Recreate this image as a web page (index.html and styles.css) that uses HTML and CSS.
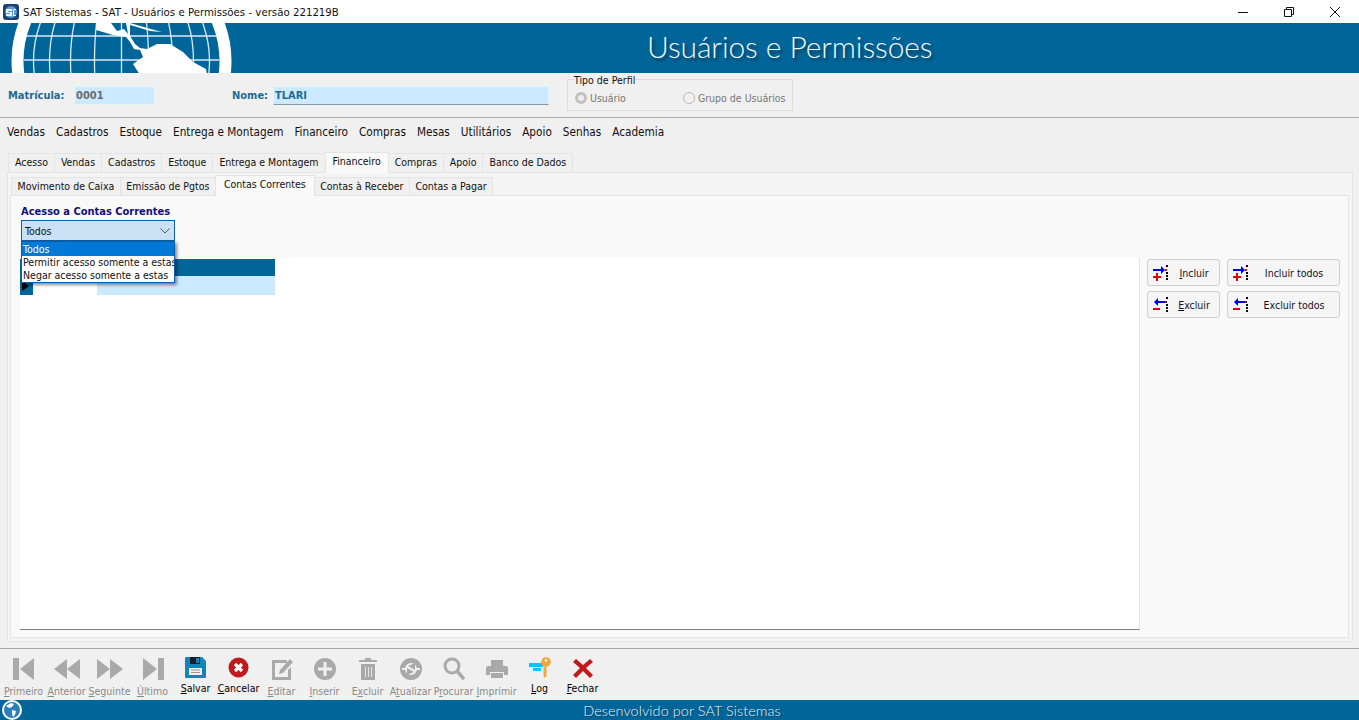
FILE: index.html
```html
<!DOCTYPE html>
<html lang="pt-BR">
<head>
  <meta charset="UTF-8" />
  <title>SAT Sistemas - Usuários e Permissões</title>
  <link rel="stylesheet" href="styles.css">
</head>
<body>
  <svg class="defs" width="0" height="0">
    <symbol id="ic-incluir" viewBox="0 0 16 16">
      <rect x="0" y="4" width="9" height="2" fill="#0000e0"/>
      <path d="M8 1l4 4-4 4z" fill="#0000e0"/>
      <rect x="12" y="4" width="2" height="2" fill="#e00000"/>
      <path d="M3 9h2v3h3v2H5v3H3v-3H0v-2h3z" fill="#e00000" transform="translate(0 -1)"/>
      <path d="M13 0h2v2h-2zM13 7h2v2h-2zM13 10h2v2h-2zM13 13h2v2h-2z" fill="#000"/>
    </symbol>
    <symbol id="ic-excluir" viewBox="0 0 16 16">
      <rect x="4" y="4" width="8" height="2" fill="#0000e0"/>
      <path d="M5 1L1 5l4 4z" fill="#0000e0"/>
      <rect x="12" y="4" width="2" height="2" fill="#e00000"/>
      <rect x="0" y="11" width="7" height="2" fill="#e00000"/>
      <path d="M13 0h2v2h-2zM13 7h2v2h-2zM13 10h2v2h-2zM13 13h2v2h-2z" fill="#000"/>
    </symbol>
  </svg>

  <!-- Barra de titulo -->
  <div class="titulo-janela">
    <svg class="app-icon" width="16" height="16" viewBox="0 0 16 16">
      <rect width="16" height="16" rx="3" fill="#1d3f73"/>
      <circle cx="8" cy="8" r="6" fill="#5f97cf"/>
      <path d="M3 5h6v2H5v1h4v4H3v-2h4V9H3zM10 5h3v1h-2v5h2v1h-3z" fill="#e9f3fb"/>
    </svg>
    <span class="titulo-texto">SAT Sistemas - SAT - Usuários e Permissões - versão 221219B</span>
    <div class="controles">
      <div class="controle"><svg width="12" height="12" viewBox="0 0 12 12"><path d="M1 6.500h10" stroke="#111" fill="none"/></svg></div>
      <div class="controle"><svg width="12" height="12" viewBox="0 0 12 12"><path d="M1.500 3.500h7v7h-7zM3.500 3.500v-2h7v7h-2" stroke="#111" fill="none"/></svg></div>
      <div class="controle"><svg width="12" height="12" viewBox="0 0 12 12"><path d="M1 1l10 10M11 1L1 11" stroke="#111" fill="none"/></svg></div>
    </div>
  </div>

  <!-- Cabecalho -->
  <div class="cabecalho">
    <svg class="globo" width="240" height="50" viewBox="0 23 240 50">
      <circle cx="121.500" cy="61" r="104" fill="none" stroke="#fff" stroke-width="12"/>
      <g fill="none" stroke="#dce9f6" stroke-width="1.300">
        <ellipse cx="121.500" cy="61" rx="27" ry="98"/>
        <ellipse cx="121.500" cy="61" rx="51" ry="98"/>
        <ellipse cx="121.500" cy="61" rx="72" ry="98"/>
        <ellipse cx="121.500" cy="61" rx="88" ry="98"/>
        <path d="M121.500 -37V159M26 36H217M24 60H219"/>
      </g>
      <path d="M96 23H111L117 31 124 29 128 34 126 23H130V36L135 44 140 48 147 49 157 44H170L183 52 193 62 206 69 207 75H140L133 64 143 57 140 50 134 49 130 42 126 37 113 35 96 30z" fill="#fff"/>
      <path d="M130 23l17 5 15 4-12-1-13-4-7-2z" fill="#fff"/>
    </svg>
    <div class="cabecalho-titulo">Usuários e Permissões</div>
  </div>

  <!-- Dados do usuario -->
  <div class="dados">
    <label class="dados-label">Matrícula:</label>
    <div class="campo campo-matricula">0001</div>
    <label class="dados-label dados-nome">Nome:</label>
    <div class="campo campo-nome">TLARI</div>
    <fieldset class="perfil">
      <legend>Tipo de Perfil</legend>
      <span class="radio radio-on"></span><span class="radio-texto">Usuário</span>
      <span class="radio radio-grupo"></span><span class="radio-texto">Grupo de Usuários</span>
    </fieldset>
  </div>

  <!-- Menu -->
  <div class="menu">
    <span>Vendas</span><span>Cadastros</span><span>Estoque</span><span>Entrega e Montagem</span><span>Financeiro</span><span>Compras</span><span>Mesas</span><span>Utilitários</span><span>Apoio</span><span>Senhas</span><span>Academia</span>
  </div>

  <div class="area">
    <div class="abas abas-1">
      <div class="aba">Acesso</div>
      <div class="aba">Vendas</div>
      <div class="aba">Cadastros</div>
      <div class="aba">Estoque</div>
      <div class="aba">Entrega e Montagem</div>
      <div class="aba ativa">Financeiro</div>
      <div class="aba">Compras</div>
      <div class="aba">Apoio</div>
      <div class="aba">Banco de Dados</div>
    </div>
    <div class="painel-externo">
      <div class="abas abas-2">
        <div class="aba">Movimento de Caixa</div>
        <div class="aba">Emissão de Pgtos</div>
        <div class="aba ativa">Contas Correntes</div>
        <div class="aba">Contas à Receber</div>
        <div class="aba">Contas a Pagar</div>
      </div>
      <div class="painel-interno">
        <h2 class="acesso-titulo">Acesso a Contas Correntes</h2>
        <div class="combo">
          <span>Todos</span>
          <svg width="10" height="6" viewBox="0 0 10 6"><path d="M.5.500L5 5 9.500.500" fill="none" stroke="#555"/></svg>
          <!-- Lista aberta do combo -->
          <div class="combo-lista">
            <div class="combo-item selecionado">Todos</div>
            <div class="combo-item">Permitir acesso somente a estas</div>
            <div class="combo-item">Negar acesso somente a estas</div>
          </div>
        </div>
        <div class="conteudo">
          <div class="grade">
            <div class="grade-cabecalho"></div>
            <div class="grade-linha">
              <div class="grade-indicador"><svg width="7" height="10" viewBox="0 0 7 10"><path d="M0 0l7 5-7 5z" fill="#000"/></svg></div>
              <div class="grade-cel"></div>
              <div class="grade-resto"></div>
            </div>
          </div>
          <div class="botoes">
            <button class="botao botao-curto"><svg width="16" height="16"><use href="#ic-incluir"/></svg><span class="botao-texto"><u>I</u>ncluir</span></button>
            <button class="botao botao-longo"><svg width="16" height="16"><use href="#ic-incluir"/></svg><span class="botao-texto">Incluir todos</span></button>
            <button class="botao botao-curto"><svg width="16" height="16"><use href="#ic-excluir"/></svg><span class="botao-texto"><u>E</u>xcluir</span></button>
            <button class="botao botao-longo"><svg width="16" height="16"><use href="#ic-excluir"/></svg><span class="botao-texto">Excluir todos</span></button>
          </div>
        </div>
      </div>
    </div>
  </div>

  <!-- Barra de ferramentas -->
  <div class="ferramentas">
    <div class="ferramenta off">
      <div class="ico"><svg width="24" height="24" viewBox="0 0 24 24"><path d="M1 1h6v22H1zM22 1v22L8 12z" fill="#a9a9a9"/></svg></div>
      <span><u>P</u>rimeiro</span>
    </div>
    <div class="ferramenta off">
      <div class="ico"><svg width="28" height="24" viewBox="0 0 28 24"><path d="M14 2v20L1 12zM27 2v20L14 12z" fill="#a9a9a9"/></svg></div>
      <span><u>A</u>nterior</span>
    </div>
    <div class="ferramenta off">
      <div class="ico"><svg width="28" height="24" viewBox="0 0 28 24"><path d="M1 2v20l13-10zM14 2v20l13-10z" fill="#a9a9a9"/></svg></div>
      <span><u>S</u>eguinte</span>
    </div>
    <div class="ferramenta off">
      <div class="ico"><svg width="24" height="24" viewBox="0 0 24 24"><path d="M23 1h-6v22h6zM2 1v22l14-11z" fill="#a9a9a9"/></svg></div>
      <span><u>Ú</u>ltimo</span>
    </div>
    <div class="ferramenta on">
      <div class="ico"><svg width="21" height="21" viewBox="0 0 21 21"><path d="M1 0h16l4 4v16a1 1 0 0 1-1 1H1a1 1 0 0 1-1-1V1a1 1 0 0 1 1-1z" fill="#1285b8"/><path d="M5 0h10v7H5z" fill="#1a1a2a"/><path d="M11 1h3v5h-3z" fill="#1285b8"/><rect x="4" y="11" width="13" height="7" fill="#f1f1f1"/><path d="M6 13h9M6 15.500h9" stroke="#999"/></svg></div>
      <span><u>S</u>alvar</span>
    </div>
    <div class="ferramenta on">
      <div class="ico"><svg width="21" height="21" viewBox="0 0 21 21"><circle cx="10.500" cy="10.500" r="10" fill="#c1191c"/><path d="M7 7l7 7M14 7l-7 7" stroke="#fff" stroke-width="3.200"/></svg></div>
      <span><u>C</u>ancelar</span>
    </div>
    <div class="ferramenta off">
      <div class="ico"><svg width="22" height="24" viewBox="0 0 22 24"><path d="M1 3h15v3H4v14h13v-7l3-3v13H1z" fill="#a9a9a9"/><path d="M19 2l3 3-10 11-4 1 1-4z" fill="#a9a9a9"/></svg></div>
      <span><u>E</u>ditar</span>
    </div>
    <div class="ferramenta off">
      <div class="ico"><svg width="22" height="24" viewBox="0 0 22 24"><circle cx="11" cy="12" r="11" fill="#a9a9a9"/><path d="M11 5v14M4 12h14" stroke="#f0f0f0" stroke-width="3"/></svg></div>
      <span><u>I</u>nserir</span>
    </div>
    <div class="ferramenta off">
      <div class="ico"><svg width="18" height="24" viewBox="0 0 18 24"><path d="M0 3h6V1h6v2h6v2H0zM2 7h14v16H2z" fill="#a9a9a9"/><path d="M6.500 10v10M9.500 10v10M12.500 10v10" stroke="#e6e6e6"/></svg></div>
      <span>E<u>x</u>cluir</span>
    </div>
    <div class="ferramenta off">
      <div class="ico"><svg width="22" height="24" viewBox="0 0 22 24"><circle cx="11" cy="12" r="8.500" fill="none" stroke="#a9a9a9" stroke-width="5"/><path d="M2 12h6M14 12h6" stroke="#f0f0f0" stroke-width="2"/><path d="M8 9l7-3v7zM14 15l-7 3v-7z" fill="#a9a9a9"/></svg></div>
      <span>A<u>t</u>ualizar</span>
    </div>
    <div class="ferramenta off">
      <div class="ico"><svg width="22" height="24" viewBox="0 0 22 24"><circle cx="9" cy="9" r="7" fill="#eee" stroke="#a9a9a9" stroke-width="3"/><path d="M14 14l7 8" stroke="#a9a9a9" stroke-width="3.500"/></svg></div>
      <span>P<u>r</u>ocurar</span>
    </div>
    <div class="ferramenta off">
      <div class="ico"><svg width="22" height="24" viewBox="0 0 22 24"><path d="M5 3h12v6H5zM2 9h18a2 2 0 0 1 2 2v7h-4v-3H4v3H0v-7a2 2 0 0 1 2-2zM5 16h12v5H5z" fill="#a9a9a9"/></svg></div>
      <span><u>I</u>mprimir</span>
    </div>
    <div class="ferramenta on">
      <div class="ico"><svg width="22" height="21" viewBox="0 0 22 21"><path d="M0 6h14v4H0zM4 11h8v3H4z" fill="#00c8f0"/><path d="M17.500 9v10l-2 2-1-2v-9z" fill="#f2a93b"/><circle cx="17" cy="5" r="4.800" fill="#f2a93b"/><circle cx="17" cy="3.500" r="1.200" fill="#fff"/></svg></div>
      <span><u>L</u>og</span>
    </div>
    <div class="ferramenta on">
      <div class="ico"><svg width="20" height="21" viewBox="0 0 20 21"><path d="M3 2l7 6 7-6 3 3-7 6 7 7-3 3-7-7-7 7-3-3 7-7-7-6z" fill="#c1191c"/></svg></div>
      <span><u>F</u>echar</span>
    </div>
  </div>

  <!-- Rodape -->
  <div class="rodape">
    <svg class="rodape-globo" width="20" height="20" viewBox="0 0 20 20">
      <circle cx="10" cy="10" r="9" fill="#2a7fb8" stroke="#fff" stroke-width="2"/>
      <path d="M4 6l5-3 3 1-2 3-3 1zM10 10l4 1-1 4-2 2-1-3z" fill="#fff"/>
    </svg>
    <span class="rodape-texto">Desenvolvido por SAT Sistemas</span>
  </div>
</body>
</html>
```

FILE: styles.css
```css
* {
  box-sizing: border-box;
}

html, body {
  height: 100%;
}

body {
  margin: 0;
  display: flex;
  flex-direction: column;
  height: 720px;
  overflow: hidden;
  background: #f0f0f0;
  font-family: "DejaVu Sans Condensed", "Noto Sans", sans-serif;
  font-size: 10.500px;
  color: #101010;
}

.defs {
  position: absolute;
}

/* Barra de titulo */
.titulo-janela {
  display: flex;
  align-items: center;
  height: 23px;
  flex: none;
  background: #fff;
  padding-left: 3px;
}

.app-icon {
  margin-right: 4px;
}

.titulo-texto {
  font-size: 11.350px;
  color: #111;
}

.controles {
  display: flex;
  margin-left: auto;
  padding-right: 1px;
}

.controle {
  display: flex;
  align-items: center;
  justify-content: center;
  width: 46px;
  height: 23px;
}

/* Cabecalho */
.cabecalho {
  display: flex;
  flex: none;
  height: 50px;
  background: #006699;
  overflow: hidden;
}

.cabecalho-titulo {
  margin-left: 407px;
  line-height: 46px;
  font-family: Lato, sans-serif;
  font-weight: 300;
  font-size: 30px;
  letter-spacing: -0.1px;
  color: #f2f8fc;
  text-shadow: 2px 3px 3px #003c5c;
  white-space: nowrap;
}

/* Dados */
.dados {
  display: flex;
  align-items: center;
  flex: none;
  height: 45px;
  padding-left: 8px;
  border-bottom: 1px solid #a8a8a8;
}

.dados-label {
  font-size: 11px;
  font-weight: 700;
  color: #1f6a94;
  width: 66px;
}

.dados-nome {
  width: 41px;
  margin-left: 77px;
}

.campo {
  height: 19px;
  line-height: 18px;
  padding-left: 1px;
  background: #cceaff;
  font-size: 11px;
  font-weight: 700;
  border: 1px solid #e8f4fc;
}

.campo-matricula {
  width: 81px;
  color: #6a6a6a;
}

.campo-nome {
  width: 276px;
  color: #1f6a94;
  border-bottom: 1px solid #8a9aa4;
}

.perfil {
  display: flex;
  align-items: center;
  width: 226px;
  height: 37px;
  margin: -6px 0 0 18px;
  padding: 1px 0 0 7px;
  border: 1px solid #dcdcdc;
  color: #777;
  white-space: nowrap;
}

.perfil legend {
  padding: 0;
  margin-left: -1px;
  line-height: 12px;
  color: #111;
}

.radio {
  width: 12px;
  height: 12px;
  border-radius: 50%;
  border: 1px solid #bbb;
  background: #f0f0f0;
  margin-right: 3px;
}

.radio-on {
  border: 3px solid #c0c0c0;
  background: #eee;
}

.radio-grupo {
  margin-left: 57px;
}

/* Menu */
.menu {
  display: flex;
  flex: none;
  gap: 11px;
  height: 35px;
  align-items: center;
  padding: 0 0 7px 7px;
  font-size: 11.700px;
}

/* Abas */
.area {
  flex: 1;
  padding: 0 6px 6px 7px;
  border-bottom: 1px solid #a8a8a8;
  display: flex;
  flex-direction: column;
}

.abas {
  display: flex;
  align-items: flex-end;
  flex: none;
}

.abas-1 {
  height: 19px;
  padding-left: 1px;
}

.abas-2 {
  height: 20px;
  padding-left: 1px;
}

.aba {
  height: 18px;
  line-height: 17px;
  padding: 0 6px;
  background: #f0f0f0;
  border: 1px solid #e4e4e4;
  border-bottom: 0;
  margin-right: -1px;
  white-space: nowrap;
}

.abas-1 .aba {
  height: 19px;
}

.abas-2 .aba {
  padding: 0 5.500px;
}

.aba.ativa,
.abas-1 .aba.ativa {
  position: relative;
  height: 21px;
  line-height: 17px;
  padding: 0 7px;
  background: #f9f9f9;
  z-index: 1;
  margin-bottom: -1px;
}

.abas-2 .aba.ativa {
  padding: 0 8px;
}

.painel-externo {
  flex: 1;
  display: flex;
  flex-direction: column;
  padding: 2px 3px 3px 2px;
  border: 1px solid #e4e4e4;
  background: #f4f4f4;
}

.painel-interno {
  flex: 1;
  padding: 9px 7px 7px 9px;
  border: 1px solid #e4e4e4;
  background: #f9f9f9;
}

.acesso-titulo {
  margin: 0 0 1px 1px;
  font-size: 11px;
  line-height: 14px;
  font-weight: 700;
  color: #10107a;
}

/* Combo */
.combo {
  position: relative;
  display: flex;
  align-items: center;
  justify-content: space-between;
  width: 154px;
  height: 21px;
  margin-left: 1px;
  padding: 0 4px 0 3px;
  background: #c9e0f5;
  border: 1px solid #0a5fa8;
}

.combo-lista {
  position: absolute;
  top: 20px;
  left: -1px;
  width: 154px;
  background: #fff;
  border: 1px solid #0a5fa8;
  box-shadow: 2px 2px 3px rgba(0, 0, 0, 0.45);
  z-index: 5;
  overflow: hidden;
}

.combo-item {
  height: 13px;
  line-height: 13px;
  padding-left: 1px;
  white-space: nowrap;
}

.combo-item.selecionado {
  height: 14px;
  line-height: 15px;
  background: #0078d7;
  color: #fff;
}

/* Grade */
.conteudo {
  display: flex;
  margin-top: 17px;
  height: 372px;
}

.grade {
  width: 1120px;
  background: #fff;
  padding-top: 1px;
  border-bottom: 1px solid #808080;
  border-right: 1px solid #e4e4e4;
}

.grade-cabecalho {
  width: 255px;
  height: 17px;
  background: #006699;
}

.grade-linha {
  display: flex;
  width: 255px;
  height: 19px;
}

.grade-indicador {
  display: flex;
  align-items: center;
  width: 13px;
  padding-left: 2px;
  background: #006699;
}

.grade-cel {
  width: 64px;
  background: #fff;
}

.grade-resto {
  flex: 1;
  background: #cceaff;
}

/* Botoes laterais */
.botoes {
  display: grid;
  grid-template-columns: 73px 113px;
  grid-auto-rows: 27px;
  gap: 5px 7px;
  margin: 1px 0 0 7px;
  align-content: start;
}

.botao {
  display: flex;
  align-items: center;
  padding: 0 0 0 5px;
  background: #f5f5f5;
  border: 1px solid #cdcdcd;
  border-radius: 3px;
  font: inherit;
  color: #101028;
}

.botao-texto {
  flex: 1;
  text-align: center;
}

/* Ferramentas */
.ferramentas {
  display: flex;
  flex: none;
  height: 51px;
  padding-left: 2px;
}

.ferramenta {
  display: flex;
  flex-direction: column;
  align-items: center;
  width: 43px;
  padding-top: 8px;
  white-space: nowrap;
}

.ferramenta span {
  line-height: 14px;
  margin-top: 3px;
}

.ferramenta.off {
  color: #8a8a8a;
}

.ferramenta.off .ico {
  height: 24px;
}

.ferramenta.on .ico {
  height: 21px;
}

.ferramenta.on {
  color: #000;
}

.ico {
  display: flex;
  align-items: center;
  justify-content: center;
}

/* Rodape */
.rodape {
  position: relative;
  flex: none;
  height: 20px;
  background: #006699;
  display: flex;
  align-items: center;
  justify-content: center;
}

.rodape-globo {
  position: absolute;
  left: 2px;
  top: 0;
}

.rodape-texto {
  margin-left: 5px;
  font-family: Lato, sans-serif;
  font-weight: 300;
  font-size: 14.500px;
  letter-spacing: .05px;
  color: #f0f6fa;
  text-shadow: 1px 1px 1px #003c5c;
}
```
